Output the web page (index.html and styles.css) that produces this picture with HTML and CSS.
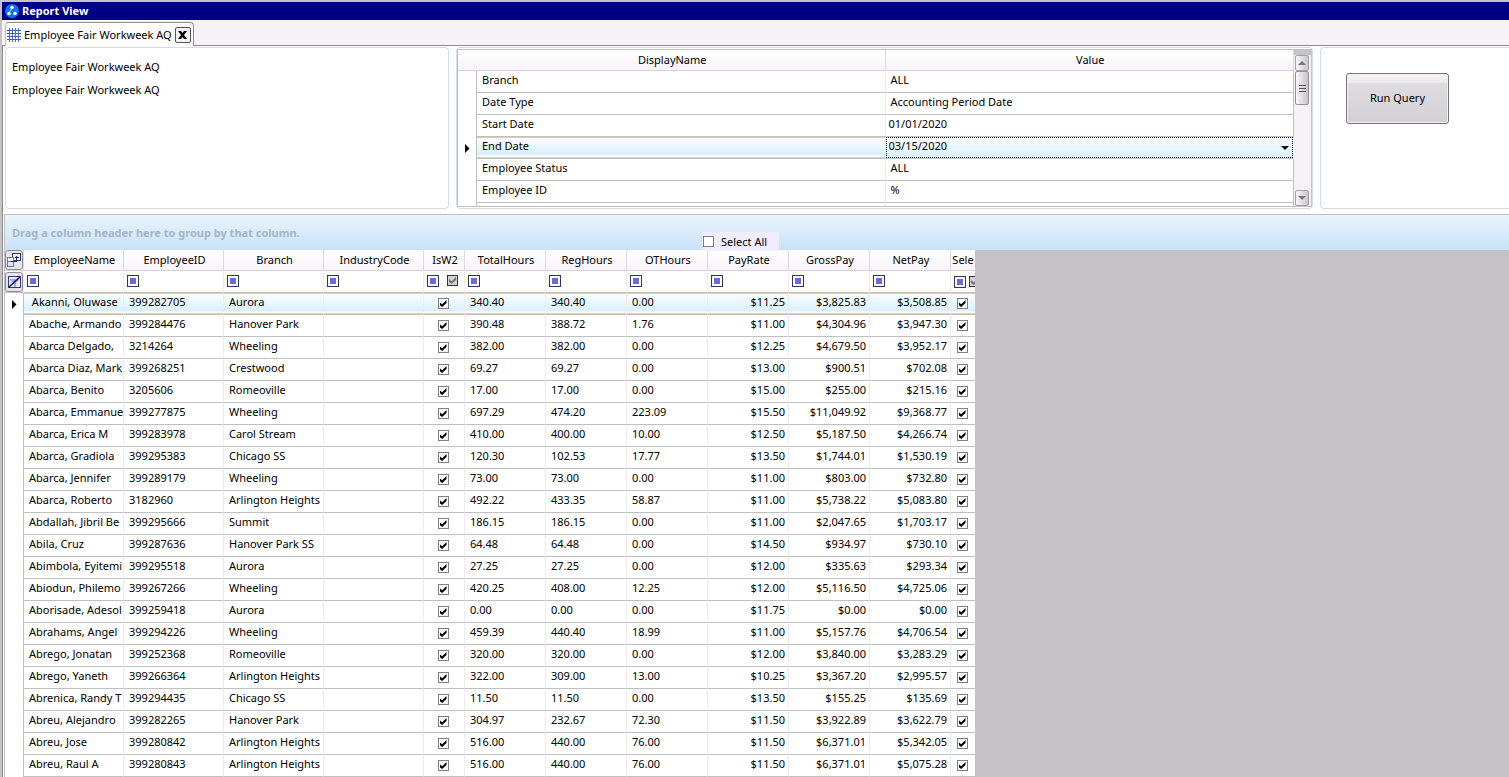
FILE: index.html
```html
<!DOCTYPE html>
<html lang="en">
<head>
    <meta charset="utf-8">
    <title>Report View</title>
    <link rel="stylesheet" href="styles.css">
</head>
<body>
    <header class="title-bar">
        <svg class="app-icon" viewBox="0 0 14 14" width="14" height="14">
            <circle cx="7" cy="7" r="7" fill="#0a74f4"/>
            <path d="M7 4 L4 9.5" stroke="#9fd0ff" stroke-width="1" fill="none"/>
            <circle cx="7" cy="3.500" r="1.700" fill="#fff"/>
            <circle cx="4" cy="9.500" r="1.700" fill="#fff"/>
            <circle cx="10" cy="9.500" r="1.700" fill="#fff"/>
        </svg>
        <h1>Report View</h1>
    </header>

    <nav class="tabs">
        <div class="tab">
            <svg viewBox="0 0 14 14" width="14" height="14" shape-rendering="crispEdges">
                <path d="M2.5 0V14M5.5 0V14M8.5 0V14M11.5 0V14" stroke="#4a78c8" fill="none"/>
                <path d="M0 2.5H14M0 5.5H14M0 8.5H14M0 11.5H14" stroke="#3a62b4" fill="none"/>
            </svg>
            <a href="#report">Employee Fair Workweek AQ</a>
            <button class="tab-close" aria-label="Close">
                <svg viewBox="0 0 9 8" width="9" height="8"><path d="M0 0H3L4.500 2L6 0H9L6 4L9 8H6L4.500 6L3 8H0L3 4Z" fill="#000"/></svg>
            </button>
        </div>
    </nav>

    <main class="content" id="report">
        <div class="panels">
            <section class="panel info">
                <p>Employee Fair Workweek AQ</p>
                <p>Employee Fair Workweek AQ</p>
            </section>

            <section class="panel params">
                <div class="params-box">
                    <div class="params-scroll">
                        <table class="params-table">
                            <colgroup><col class="col-marker"><col><col></colgroup>
                            <thead>
                                <tr><th colspan="2">DisplayName</th><th>Value</th></tr>
                            </thead>
                            <tbody>
                                <tr><td class="marker"></td><td>Branch</td><td>ALL</td></tr>
                                <tr><td class="marker"></td><td>Date Type</td><td>Accounting Period Date</td></tr>
                                <tr><td class="marker"></td><td>Start Date</td><td class="date">01/01/2020</td></tr>
                                <tr class="current">
                                    <td class="marker"><span class="arrow"></span></td>
                                    <td><label for="end-date">End Date</label></td>
                                    <td class="editor">
                                        <select id="end-date"><option>03/15/2020</option></select>
                                        <span class="drop-arrow"></span>
                                    </td>
                                </tr>
                                <tr><td class="marker"></td><td>Employee Status</td><td>ALL</td></tr>
                                <tr><td class="marker"></td><td>Employee ID</td><td>%</td></tr>
                                <tr><td class="marker"></td><td></td><td></td></tr>
                            </tbody>
                        </table>
                    </div>
                    <div class="scrollbar">
                        <button class="scroll-btn" aria-label="Scroll up"><span class="tri-up"></span></button>
                        <div class="thumb"><i></i><i></i><i></i></div>
                        <button class="scroll-btn last" aria-label="Scroll down"><span class="tri-down"></span></button>
                    </div>
                </div>
            </section>

            <section class="panel actions">
                <button class="run-btn">Run Query</button>
            </section>
        </div>

        <div class="grid">
            <div class="group-bar">
                Drag a column header here to group by that column.
                <label class="select-all"><input type="checkbox" class="check"> Select All</label>
            </div>
            <table class="data">
                <colgroup>
                    <col class="col-marker">
                    <col class="wide"><col class="wide"><col class="wide"><col class="wide">
                    <col class="flag">
                    <col class="num"><col class="num"><col class="num"><col class="num"><col class="num"><col class="num">
                    <col class="sel">
                </colgroup>
                <thead>
                    <tr>
                        <th class="tool">
                            <button aria-label="Choose columns">
                                <svg viewBox="0 0 14 14" width="14" height="14" shape-rendering="crispEdges">
                                    <rect x="5.500" y="0.500" width="8" height="7" fill="#eef" stroke="#343a80"/>
                                    <rect x="0.500" y="4.500" width="6" height="4" fill="#fff" stroke="#6f74b4"/>
                                    <rect x="0.500" y="8.500" width="6" height="5" fill="#dfe0f6" stroke="#6f74b4"/>
                                    <path d="M4 8.500H9.500V3M7.500 4.500H11.500" stroke="#252a70" fill="none"/>
                                </svg>
                            </button>
                        </th>
                        <th>EmployeeName</th><th>EmployeeID</th><th>Branch</th><th>IndustryCode</th><th>IsW2</th>
                        <th>TotalHours</th><th>RegHours</th><th>OTHours</th><th>PayRate</th><th>GrossPay</th><th>NetPay</th><th>Sele</th>
                    </tr>
                    <tr class="filters" id="filters">
                        <th class="tool">
                            <button aria-label="Clear filters">
                                <svg viewBox="0 0 13 12" width="13" height="12">
                                    <rect x="0.500" y="0.500" width="12" height="11" fill="#e8e8fa" stroke="#343a80"/>
                                    <path d="M2 3H11V4L8 7V11H6V7L2 4Z" fill="#a4a8dc"/>
                                    <path d="M1 11L12 1" stroke="#10143c" stroke-width="1.500"/>
                                </svg>
                            </button>
                        </th>
                    </tr>
                </thead>
                <tbody id="rows"></tbody>
            </table>
        </div>
    </main>

    <script>
        // name, id, branch, total, regular, overtime, rate, gross, net
        const employees = [
            ['\u00a0Akanni, Oluwase', '399282705', 'Aurora', '340.40', '340.40', '0.00', '$11.25', '$3,825.83', '$3,508.85'],
            ['Abache, Armando', '399284476', 'Hanover Park', '390.48', '388.72', '1.76', '$11.00', '$4,304.96', '$3,947.30'],
            ['Abarca Delgado,', '3214264', 'Wheeling', '382.00', '382.00', '0.00', '$12.25', '$4,679.50', '$3,952.17'],
            ['Abarca Diaz, Mark', '399268251', 'Crestwood', '69.27', '69.27', '0.00', '$13.00', '$900.51', '$702.08'],
            ['Abarca, Benito', '3205606', 'Romeoville', '17.00', '17.00', '0.00', '$15.00', '$255.00', '$215.16'],
            ['Abarca, Emmanue', '399277875', 'Wheeling', '697.29', '474.20', '223.09', '$15.50', '$11,049.92', '$9,368.77'],
            ['Abarca, Erica M', '399283978', 'Carol Stream', '410.00', '400.00', '10.00', '$12.50', '$5,187.50', '$4,266.74'],
            ['Abarca, Gradiola', '399295383', 'Chicago SS', '120.30', '102.53', '17.77', '$13.50', '$1,744.01', '$1,530.19'],
            ['Abarca, Jennifer', '399289179', 'Wheeling', '73.00', '73.00', '0.00', '$11.00', '$803.00', '$732.80'],
            ['Abarca, Roberto', '3182960', 'Arlington Heights', '492.22', '433.35', '58.87', '$11.00', '$5,738.22', '$5,083.80'],
            ['Abdallah, Jibril Be', '399295666', 'Summit', '186.15', '186.15', '0.00', '$11.00', '$2,047.65', '$1,703.17'],
            ['Abila, Cruz', '399287636', 'Hanover Park SS', '64.48', '64.48', '0.00', '$14.50', '$934.97', '$730.10'],
            ['Abimbola, Eyitemi', '399295518', 'Aurora', '27.25', '27.25', '0.00', '$12.00', '$335.63', '$293.34'],
            ['Abiodun, Philemo', '399267266', 'Wheeling', '420.25', '408.00', '12.25', '$12.00', '$5,116.50', '$4,725.06'],
            ['Aborisade, Adesol', '399259418', 'Aurora', '0.00', '0.00', '0.00', '$11.75', '$0.00', '$0.00'],
            ['Abrahams, Angel', '399294226', 'Wheeling', '459.39', '440.40', '18.99', '$11.00', '$5,157.76', '$4,706.54'],
            ['Abrego, Jonatan', '399252368', 'Romeoville', '320.00', '320.00', '0.00', '$12.00', '$3,840.00', '$3,283.29'],
            ['Abrego, Yaneth', '399266364', 'Arlington Heights', '322.00', '309.00', '13.00', '$10.25', '$3,367.20', '$2,995.57'],
            ['Abrenica, Randy T', '399294435', 'Chicago SS', '11.50', '11.50', '0.00', '$13.50', '$155.25', '$135.69'],
            ['Abreu, Alejandro', '399282265', 'Hanover Park', '304.97', '232.67', '72.30', '$11.50', '$3,922.89', '$3,622.79'],
            ['Abreu, Jose', '399280842', 'Arlington Heights', '516.00', '440.00', '76.00', '$11.50', '$6,371.01', '$5,342.05'],
            ['Abreu, Raul A', '399280843', 'Arlington Heights', '516.00', '440.00', '76.00', '$11.50', '$6,371.01', '$5,075.28']
        ];

        const check = (label) => `<td class="tick"><input type="checkbox" class="check" aria-label="${label}" checked></td>`;

        document.getElementById('rows').innerHTML = employees.map((e, i) => `
            <tr class="${i === 0 ? 'current' : ''}">
                <td class="marker">${i === 0 ? '<span class="arrow"></span>' : ''}</td>
                <td>${e[0]}</td><td>${e[1]}</td><td>${e[2]}</td><td></td>
                ${check('IsW2')}
                <td>${e[3]}</td><td>${e[4]}</td><td>${e[5]}</td>
                <td class="money">${e[6]}</td><td class="money">${e[7]}</td><td class="money">${e[8]}</td>
                ${check('Select')}
            </tr>`).join('');

        let filters = '';
        for (let i = 0; i < 12; i++) {
            const mixed = i === 4 || i === 11 ? '<input type="checkbox" class="check mixed" aria-label="Filter value" checked>' : '';
            filters += `<th><div class="filter"><button class="filter-btn" aria-label="Filter"></button>${mixed}</div></th>`;
        }
        document.getElementById('filters').insertAdjacentHTML('beforeend', filters);
    </script>
</body>
</html>
```
FILE: styles.css
```css
:root {
    --line: #c0c0c0;
    --panel-line: #d3dce8;
    --gray: #c5c3c6;
    --navy: #000084;
    --tint: #f7f2f7;
}

* {
    box-sizing: border-box;
}

body {
    margin: 0;
    padding: 2px 0 0 2px;
    height: 100vh;
    overflow: hidden;
    display: flex;
    flex-direction: column;
    background: var(--gray);
    font-family: "Noto Sans", "Open Sans", sans-serif;
    font-size: 11px;
    line-height: 16px;
    color: #000;
}

button, input, select {
    font: inherit;
    color: inherit;
    margin: 0;
    padding: 0;
}

a {
    color: inherit;
    text-decoration: none;
}

.title-bar {
    display: flex;
    align-items: center;
    gap: 3px;
    height: 18px;
    padding-left: 3px;
    background: var(--navy);
    color: #fff;
}

.title-bar h1 {
    margin: 0;
    font-size: 11px;
    font-weight: 700;
}

.tabs {
    display: flex;
    align-items: flex-end;
    height: 26px;
    padding-left: 3px;
    background: var(--tint);
    border-bottom: 1px solid #8c8a90;
}

.tab {
    display: flex;
    align-items: center;
    gap: 3px;
    height: 24px;
    margin-bottom: -1px;
    padding: 0 2px 0 1px;
    background: #fff;
    border: 1px solid #8c8a90;
    border-bottom: 0;
    border-left-color: var(--line);
    border-radius: 4px 4px 0 0;
}

.tab-close {
    display: flex;
    align-items: center;
    justify-content: center;
    width: 16px;
    height: 16px;
    background: #f4f2f5;
    border: 1px solid #555;
    border-radius: 2px;
}

.content {
    flex: 1;
    min-height: 0;
    display: flex;
    flex-direction: column;
    background: #fff;
    border-left: 1px solid #8c8a90;
}

.panels {
    display: grid;
    grid-template-columns: 444px minmax(0, 1fr) 189px;
    gap: 7px;
    padding: 1px 0 5px 2px;
}

.panel {
    height: 162px;
    border: 1px solid var(--panel-line);
    border-radius: 4px;
}

.info {
    padding: 11px 6px;
}

.info p {
    margin: 0 0 7px;
}

.params-box {
    display: flex;
    height: 158px;
    margin: 1px 0;
    border: 1px solid var(--line);
    border-right: 0;
    overflow: hidden;
}

.params-scroll {
    flex: 1;
    overflow: hidden;
}

table {
    table-layout: fixed;
    border-spacing: 0;
}

.params-table {
    width: 100%;
}

.col-marker {
    width: 19px;
}

th, td {
    height: 22px;
    padding: 0 5px 4px;
    overflow: hidden;
    white-space: nowrap;
    text-align: left;
    border-bottom: 1px solid var(--line);
    border-right: 1px solid #efebf0;
    background: #fff;
}

th {
    height: 21px;
    padding: 0 0 0 2px;
    font-weight: 400;
    text-align: center;
    background: linear-gradient(#fff, #f8f3fa);
    border-bottom-color: #d6d2d8;
    border-right-color: #dedae0;
}

.params-table td.date {
    padding-left: 3px;
}

.params-table td:last-child {
    border-right-color: var(--line);
}

td.marker {
    padding: 0;
    border-bottom: 0;
    border-right-color: var(--line);
}

.arrow {
    display: block;
    width: 5px;
    height: 10px;
    margin: 1px auto 0;
    background: #000;
    clip-path: polygon(0 0, 100% 50%, 0 100%);
}

.current td:not(.marker) {
    background: linear-gradient(#a8dcf2 1px, #fafdff 1px, #d9f0fd 18px, #fff 19px, #fff 20px, #a8dcf2 20px);
}

.current td.editor {
    position: relative;
    padding: 0;
    border-right-color: #fff;
}

.editor select {
    display: block;
    width: 100%;
    height: 21px;
    padding: 0 2px 3px;
    appearance: none;
    background: linear-gradient(#fafdff, #d9f0fd);
    border: 1px dotted #000;
    border-radius: 0;
}

.drop-arrow {
    position: absolute;
    right: 4px;
    top: 9px;
    width: 8px;
    height: 4px;
    background: #000;
    clip-path: polygon(0 0, 100% 0, 50% 100%);
    pointer-events: none;
}

.scrollbar {
    display: flex;
    flex-direction: column;
    width: 18px;
    padding: 5px 2px 0 1px;
    background: linear-gradient(var(--gray) 5px, #f5f1f6 5px);
    border-right: 1px solid var(--gray);
}

.scroll-btn {
    display: flex;
    align-items: center;
    justify-content: center;
    height: 16px;
    background: linear-gradient(90deg, #f8f6f9, #c8c6ca);
    border: 1px solid #a4a2a7;
    border-radius: 2px;
}

.scroll-btn.last {
    margin-top: auto;
}

.tri-up, .tri-down {
    width: 8px;
    height: 4px;
    background: #77757a;
}

.tri-up {
    clip-path: polygon(50% 0, 100% 100%, 0 100%);
}

.tri-down {
    clip-path: polygon(0 0, 100% 0, 50% 100%);
}

.thumb {
    display: flex;
    flex-direction: column;
    align-items: center;
    justify-content: center;
    gap: 2px;
    height: 34px;
    background: linear-gradient(90deg, #faf8fb, #c4c2c6);
    border: 1px solid #949297;
    border-radius: 2px;
}

.thumb i {
    width: 7px;
    height: 1px;
    background: #555;
}

.actions {
    padding: 25px;
    border-right: 0;
    border-radius: 4px 0 0 4px;
}

.run-btn {
    width: 103px;
    height: 51px;
    padding-bottom: 2px;
    background: linear-gradient(#faf3f9, #eee9ef 9px, #dedcdf 9px, #d2d0d4);
    border: 1px solid #77757a;
    border-radius: 3px;
    box-shadow: inset 0 0 0 1px #f2f0f3;
}

.grid {
    flex: 1;
    min-height: 0;
    overflow: hidden;
    margin-left: 1px;
    background: var(--gray);
    border-top: 1px solid var(--line);
    border-left: 1px solid var(--line);
}

.group-bar {
    position: relative;
    height: 35px;
    padding: 10px 7px;
    background: linear-gradient(#e9f4fd, #c9e1f8);
    color: #a5b5c5;
    font-weight: 700;
}

/* floats over the group bar, above the PayRate column */
.select-all {
    position: absolute;
    left: 697px;
    bottom: -1px;
    display: flex;
    align-items: center;
    gap: 7px;
    height: 19px;
    padding: 0 12px 0 1px;
    background: #f0edff;
    color: #000;
    font-weight: 400;
}

.data {
    width: 969px;
}

.data .col-marker {
    width: 19px;
}

.wide {
    width: 100px;
}

.flag {
    width: 41px;
}

.num {
    width: 81px;
}

.sel {
    width: 24px;
}

.data .money {
    padding-right: 3px;
    text-align: right;
}

.data td:last-child, .data th:last-child {
    border-right: 0;
}

.data .tick {
    padding: 0 2px 0 0;
}

.tool button {
    display: flex;
    align-items: center;
    justify-content: center;
    width: 18px;
    height: 20px;
    background: #e8e5ea;
    border: 1px solid #8c8a90;
    border-radius: 3px;
}

.filters th {
    height: 22px;
    padding: 0 0 2px;
    background: #fff;
    border-bottom-color: var(--line);
    border-right-color: #efebf0;
}

.data th.tool, .data th:last-child {
    padding: 0;
}

.filter {
    display: flex;
    align-items: center;
    gap: 8px;
    padding-left: 3px;
}

th:last-child .filter {
    gap: 3px;
}

.filter-btn {
    flex: none;
    width: 12px;
    height: 12px;
    background: #6a6ad8;
    border: 1px solid #34346c;
    box-shadow: inset 0 0 0 2px #fff;
}

.check {
    appearance: none;
    flex: none;
    display: block;
    width: 11px;
    height: 11px;
    background: #fff;
    border: 1px solid #808080;
}

.tick .check {
    margin: 0 auto;
}

.check:checked::before {
    content: "";
    display: block;
    width: 7px;
    height: 7px;
    margin: 1px;
    background: #000;
    clip-path: polygon(0 28%, 38% 62%, 100% 0, 100% 42%, 38% 100%, 0 70%);
}

.check.mixed {
    background: #d4d2d6;
    border-color: #333;
}

.check.mixed::before {
    background: #77757a;
}
```
